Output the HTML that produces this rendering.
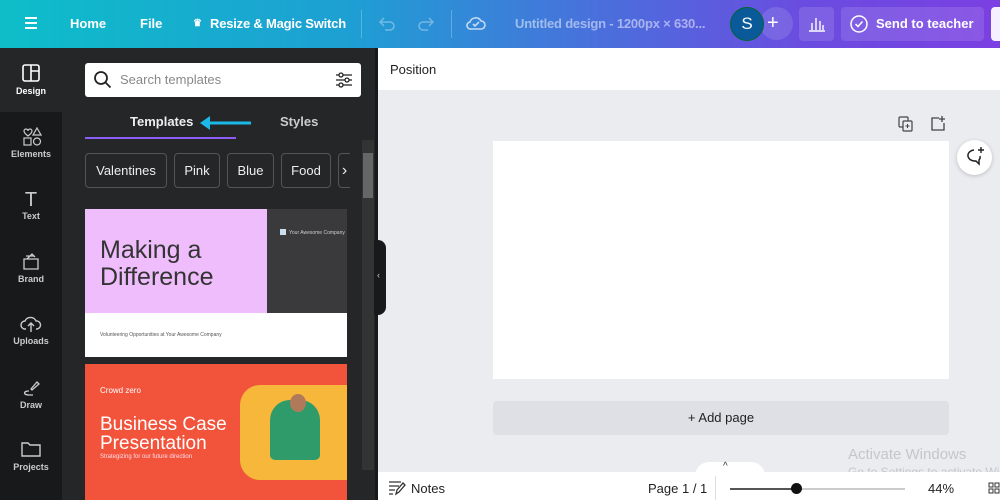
<!DOCTYPE html>
<html><head><style>
*{margin:0;padding:0;box-sizing:border-box}
body{width:1000px;height:500px;overflow:hidden;font-family:"Liberation Sans",sans-serif;position:relative;background:#ebecf0}
.a{position:absolute}
.hdr{left:0;top:0;width:1000px;height:48px;background:linear-gradient(90deg,#0dbec9 0%,#1e9fd3 35%,#4a6fdc 60%,#6a4de0 80%,#7b3fe2 100%)}
.hdr .t{color:#fff;font-weight:bold;font-size:13px;top:16px}
.rail{left:0;top:48px;width:62px;height:452px;background:#18191b}
.ri{left:0;width:62px;text-align:center;color:#ccc;font-size:9px;font-weight:bold}
.panel{left:62px;top:48px;width:313px;height:452px;background:#252627}
.chip{top:153px;height:35px;border:1px solid #555;border-radius:4px;color:#eee;font-size:13px;line-height:33px;text-align:center}
</style></head><body>
<div class="a hdr">
 <div class="a" style="left:25px;top:17px;width:12px;height:2px;background:#fff;box-shadow:0 5px #fff,0 10px #fff"></div>
 <div class="a t" style="left:70px">Home</div>
 <div class="a t" style="left:140px">File</div>
 <div class="a t" style="left:193px;font-size:10px;top:18px">♛</div>
 <div class="a t" style="left:210px;letter-spacing:-0.2px">Resize &amp; Magic Switch</div>
 <div class="a" style="left:361px;top:10px;width:1px;height:28px;background:rgba(255,255,255,.25)"></div>
 <svg class="a" style="left:377px;top:14px" width="20" height="20"><path d="M4 8h9a4 4 0 0 1 0 8H8M7 4L3 8l4 4" fill="none" stroke="#fff" stroke-opacity=".35" stroke-width="1.5"/></svg>
 <svg class="a" style="left:416px;top:14px" width="20" height="20"><path d="M16 8H7a4 4 0 0 0 0 8h5M13 4l4 4-4 4" fill="none" stroke="#fff" stroke-opacity=".35" stroke-width="1.5"/></svg>
 <div class="a" style="left:451px;top:10px;width:1px;height:28px;background:rgba(255,255,255,.25)"></div>
 <svg class="a" style="left:466px;top:14px" width="20" height="18" viewBox="0 0 20 18"><path d="M5 15h10a4 4 0 0 0 0-8 6 6 0 0 0-11 1 3.5 3.5 0 0 0 1 7z" fill="none" stroke="#fff" stroke-opacity=".7" stroke-width="1.6"/><path d="M7 10l2 2 4-4" fill="none" stroke="#fff" stroke-opacity=".7" stroke-width="1.6"/></svg>
 <div class="a t" style="left:515px;color:rgba(255,255,255,.5);letter-spacing:-0.2px">Untitled design - 1200px × 630...</div>
 <div class="a" style="left:760px;top:7px;width:33px;height:33px;border-radius:50%;background:rgba(255,255,255,.12)"></div>
 <div class="a t" style="left:767px;font-size:20px;top:12px;font-weight:normal">+</div>
 <div class="a" style="left:730px;top:7px;width:34px;height:34px;border-radius:50%;background:#0a5a9a;border:1.5px solid #063;color:#fff;font-size:17px;text-align:center;line-height:31px">S</div>
 <div class="a" style="left:799px;top:7px;width:35px;height:34px;border-radius:4px;background:rgba(255,255,255,.12)"></div>
 <svg class="a" style="left:807px;top:14px" width="20" height="20"><path d="M2 17h16M5 16V9M9 16V4M13 16V7M16 16V11" stroke="#fff" stroke-width="1.4"/></svg>
 <div class="a" style="left:841px;top:7px;width:143px;height:34px;border-radius:4px;background:rgba(255,255,255,.12)"></div>
 <svg class="a" style="left:849px;top:14px" width="20" height="20"><circle cx="10" cy="10" r="8" fill="none" stroke="#fff" stroke-width="1.5"/><path d="M6.5 10l2.5 2.5 4.5-5" fill="none" stroke="#fff" stroke-width="1.5"/></svg>
 <div class="a t" style="left:876px">Send to teacher</div>
 <div class="a" style="left:991px;top:7px;width:20px;height:34px;border-radius:4px;background:#f4f0ff"></div>
</div>
<div class="a rail"></div>
<div class="a" style="left:0;top:48px;width:62px;height:64px;background:#252627"></div>
<div class="a" style="left:0;top:112px;width:62px;height:388px;background:#18191b;border-top-right-radius:8px"></div>
<svg class="a" style="left:22px;top:64px" width="18" height="18"><rect x="1" y="1" width="16" height="16" rx="2" fill="none" stroke="#fff" stroke-width="1.6"/><path d="M9 1v16M9 7h8" stroke="#fff" stroke-width="1.6"/></svg>
<div class="a ri" style="top:86px;color:#fff">Design</div>
<svg class="a" style="left:22px;top:127px" width="20" height="20"><path d="M2 4a2 2 0 0 1 4 0 2 2 0 0 1 4 0c0 2-4 5-4 5s-4-3-4-5z" fill="none" stroke="#ccc" stroke-width="1.2"/><rect x="2" y="11" width="7" height="7" fill="none" stroke="#ccc" stroke-width="1.2"/><circle cx="15" cy="14.5" r="3.5" fill="none" stroke="#ccc" stroke-width="1.2"/><path d="M15 1l4 7h-8z" fill="none" stroke="#ccc" stroke-width="1.2"/></svg>
<div class="a ri" style="top:149px">Elements</div>
<div class="a ri" style="top:189px;font-size:20px;font-weight:normal">T</div>
<div class="a ri" style="top:211px">Text</div>
<svg class="a" style="left:21px;top:251px" width="20" height="20"><path d="M3 8h14v10H3zM6 8l5-5 3 3M5 5h8" fill="none" stroke="#ccc" stroke-width="1.3"/></svg>
<div class="a ri" style="top:274px">Brand</div>
<svg class="a" style="left:20px;top:314px" width="22" height="20"><path d="M6 15H5a4 4 0 0 1 0-8 6 6 0 0 1 11 0 4 4 0 0 1 1 8h-1M11 18V9M8 12l3-3 3 3" fill="none" stroke="#ccc" stroke-width="1.4"/></svg>
<div class="a ri" style="top:336px">Uploads</div>
<svg class="a" style="left:21px;top:377px" width="20" height="20"><path d="M10 12l6-7 2 2-7 6zM8 14c-6 0-6 4 0 4h4" fill="none" stroke="#ccc" stroke-width="1.3"/></svg>
<div class="a ri" style="top:400px">Draw</div>
<svg class="a" style="left:21px;top:440px" width="20" height="18"><path d="M1 3h6l2 2h10v11H1z" fill="none" stroke="#ccc" stroke-width="1.4"/></svg>
<div class="a ri" style="top:462px">Projects</div>
<div class="a" style="left:63px;top:58px;width:7px;height:314px;background:#888;border-radius:2px"></div>
<div class="a panel"></div>
<div class="a" style="left:85px;top:63px;width:276px;height:34px;background:#fff;border-radius:3px"></div>
<svg class="a" style="left:93px;top:70px" width="20" height="20"><circle cx="8" cy="8" r="6" fill="none" stroke="#222" stroke-width="1.8"/><path d="M12.5 12.5l5 5" stroke="#222" stroke-width="1.8"/></svg>
<div class="a" style="left:120px;top:72px;color:#888;font-size:13px">Search templates</div>
<svg class="a" style="left:334px;top:70px" width="20" height="20"><path d="M2 5h16M2 10h16M2 15h16" stroke="#222" stroke-width="1.3"/><circle cx="7" cy="5" r="2" fill="#fff" stroke="#222" stroke-width="1.3"/><circle cx="13" cy="10" r="2" fill="#fff" stroke="#222" stroke-width="1.3"/><circle cx="7" cy="15" r="2" fill="#fff" stroke="#222" stroke-width="1.3"/></svg>
<div class="a" style="left:130px;top:114px;color:#eee;font-size:13px;font-weight:bold">Templates</div>
<div class="a" style="left:280px;top:114px;color:#ccc;font-size:13px;font-weight:bold">Styles</div>
<svg class="a" style="left:198px;top:115px" width="55" height="16"><path d="M53 8H10" stroke="#1bb8e8" stroke-width="3"/><path d="M2 8l10-7v14z" fill="#1bb8e8"/></svg>
<div class="a" style="left:85px;top:137px;width:151px;height:2px;background:#8b5cf6"></div>
<div class="a chip" style="left:85px;width:82px">Valentines</div>
<div class="a chip" style="left:174px;width:46px">Pink</div>
<div class="a chip" style="left:227px;width:47px">Blue</div>
<div class="a chip" style="left:281px;width:50px">Food</div>
<div class="a chip" style="left:338px;width:12px;border-right:none;border-radius:4px 0 0 4px;font-size:16px">›</div>
<div class="a" style="left:362px;top:140px;width:12px;height:330px;background:#333"></div>
<div class="a" style="left:363px;top:153px;width:10px;height:45px;background:#666"></div>
<div class="a" style="left:85px;top:209px;width:182px;height:104px;background:#efbdfb"></div>
<div class="a" style="left:267px;top:209px;width:80px;height:104px;background:#3a3a3c"></div>
<div class="a" style="left:280px;top:229px;width:6px;height:6px;background:#cde"></div>
<div class="a" style="left:289px;top:230px;color:#ccc;font-size:5px">Your Awesome Company</div>
<div class="a" style="left:100px;top:237px;color:#333;font-size:25px;line-height:27px">Making a<br>Difference</div>
<div class="a" style="left:85px;top:313px;width:262px;height:44px;background:#fff"></div>
<div class="a" style="left:100px;top:332px;color:#555;font-size:5px">Volunteering Opportunities at Your Awesome Company</div>
<div class="a" style="left:85px;top:364px;width:262px;height:136px;background:#f2533b"></div>
<div class="a" style="left:240px;top:385px;width:107px;height:95px;background:#f7b73a;border-radius:20px 0 0 20px"></div>
<div class="a" style="left:270px;top:400px;width:50px;height:60px;background:#2f9a6a;border-radius:20px 20px 5px 5px"></div>
<div class="a" style="left:290px;top:394px;width:16px;height:18px;background:#b07a5a;border-radius:50%"></div>
<div class="a" style="left:100px;top:386px;color:#fff;font-size:8px">Crowd zero</div>
<div class="a" style="left:100px;top:415px;color:#fff;font-size:19px;line-height:19px">Business Case<br>Presentation</div>
<div class="a" style="left:100px;top:454px;color:#fde;font-size:6px">Strategizing for our future direction</div>
<div class="a" style="left:375px;top:48px;width:3px;height:452px;background:#18191b"></div>
<div class="a" style="left:374px;top:240px;width:12px;height:75px;background:#18191b;border-radius:0 8px 8px 0"></div>
<div class="a" style="left:377px;top:270px;color:#ccc;font-size:9px">‹</div>
<div class="a" style="left:378px;top:48px;width:622px;height:42px;background:#fff"></div>
<div class="a" style="left:390px;top:62px;color:#222;font-size:13px">Position</div>
<svg class="a" style="left:898px;top:116px" width="16" height="16"><rect x="1" y="1" width="9" height="10" rx="1" fill="none" stroke="#444" stroke-width="1.2"/><rect x="5" y="5" width="9" height="10" rx="1" fill="#ebecf0" stroke="#444" stroke-width="1.2"/><path d="M9.5 8v4M7.5 10h4" stroke="#444"/></svg>
<svg class="a" style="left:930px;top:115px" width="16" height="16"><path d="M9 3H2v12h12V8M12 1v6M9 4h6" fill="none" stroke="#444" stroke-width="1.3"/></svg>
<div class="a" style="left:493px;top:141px;width:456px;height:238px;background:#fff"></div>
<div class="a" style="left:957px;top:140px;width:35px;height:35px;border-radius:50%;background:#fff;box-shadow:0 1px 4px rgba(0,0,0,.2)"></div>
<svg class="a" style="left:964px;top:146px" width="22" height="22"><path d="M10 4a7 5.5 0 1 0 2 11l3 3v-4a5.5 5 0 0 0 1-4" fill="none" stroke="#222" stroke-width="1.5"/><path d="M17 1v6M14 4h6" stroke="#222" stroke-width="1.4"/></svg>
<div class="a" style="left:493px;top:401px;width:456px;height:34px;background:#dfe0e5;border-radius:4px;text-align:center;line-height:34px;font-size:13px;color:#222">+ Add page</div>
<div class="a" style="left:848px;top:446px;color:#c4c6cc;font-size:15px">Activate Windows</div>
<div class="a" style="left:848px;top:465px;color:#c4c6cc;font-size:12px;white-space:nowrap">Go to Settings to activate Windows.</div>
<div class="a" style="left:378px;top:472px;width:622px;height:28px;background:#fff"></div>
<div class="a" style="left:695px;top:462px;width:70px;height:14px;background:#fff;border-radius:14px 14px 0 0"></div>
<div class="a" style="left:723px;top:461px;color:#333;font-size:10px">^</div>
<svg class="a" style="left:388px;top:480px" width="18" height="16"><path d="M1 2h12M1 6h10M1 10h6M1 14h4M8 14l1-4 6-7 2 2-6 7z" fill="none" stroke="#333" stroke-width="1.3"/></svg>
<div class="a" style="left:411px;top:481px;color:#222;font-size:13px">Notes</div>
<div class="a" style="left:648px;top:481px;color:#222;font-size:13px">Page 1 / 1</div>
<div class="a" style="left:715px;top:476px;width:1px;height:24px;background:#ddd"></div>
<div class="a" style="left:730px;top:488px;width:67px;height:2px;background:#555"></div>
<div class="a" style="left:797px;top:488px;width:108px;height:2px;background:#ccc"></div>
<div class="a" style="left:791px;top:483px;width:11px;height:11px;border-radius:50%;background:#111"></div>
<div class="a" style="left:928px;top:481px;color:#222;font-size:13px">44%</div>
<svg class="a" style="left:988px;top:482px" width="12" height="12"><rect x="1" y="1" width="4" height="4" fill="none" stroke="#333"/><rect x="7" y="1" width="4" height="4" fill="none" stroke="#333"/><rect x="1" y="7" width="4" height="4" fill="none" stroke="#333"/><rect x="7" y="7" width="4" height="4" fill="none" stroke="#333"/></svg>
</body></html>
